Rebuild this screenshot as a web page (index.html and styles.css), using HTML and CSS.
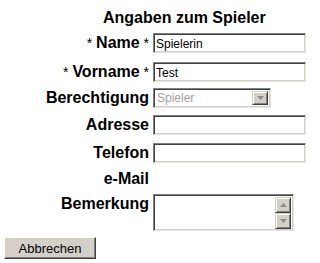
FILE: index.html
```html
<!DOCTYPE html>
<html lang="de">
<head>
<meta charset="utf-8">
<title>Angaben zum Spieler</title>
<link rel="stylesheet" href="styles.css">
</head>
<body>
<div class="page">
  <h1 class="title">Angaben zum Spieler</h1>
  <div class="form">
    <label class="lbl"><span class="req">* </span>Name<span class="req"> *</span></label>
    <div class="field"><input class="text" type="text" value="Spielerin"></div>

    <label class="lbl shift-down2"><span class="req">* </span>Vorname<span class="req"> *</span></label>
    <div class="field shift-down2"><input class="text" type="text" value="Test"></div>

    <label class="lbl shift-up1">Berechtigung</label>
    <div class="field shift-up1">
      <div class="select">
        <span class="select-value">Spieler</span>
        <span class="btn-arrow">
          <svg width="7" height="4" viewBox="0 0 7 4"><path d="M0 0H7L3.5 4Z" fill="#8c8c8c"/></svg>
        </span>
      </div>
    </div>

    <label class="lbl">Adresse</label>
    <div class="field"><input class="text" type="text" value=""></div>

    <label class="lbl shift-down1">Telefon</label>
    <div class="field shift-down1"><input class="text" type="text" value=""></div>

    <label class="lbl">e-Mail</label>
    <div class="field"></div>

    <label class="lbl lbl-top">Bemerkung</label>
    <div class="field shift-up1">
      <div class="area">
        <textarea class="area-input"></textarea>
        <div class="scroll">
          <span class="btn-arrow sb">
            <svg width="7" height="4" viewBox="0 0 7 4"><path d="M0 4H7L3.5 0Z" fill="#8c8c8c"/></svg>
          </span>
          <span class="btn-arrow sb">
            <svg width="7" height="4" viewBox="0 0 7 4"><path d="M0 0H7L3.5 4Z" fill="#8c8c8c"/></svg>
          </span>
        </div>
      </div>
    </div>
  </div>
  <button class="cancel" type="button">Abbrechen</button>
</div>
</body>
</html>
```

FILE: styles.css
```css
html, body {
  margin: 0;
  padding: 0;
  background: #ffffff;
}

body {
  font-family: "Liberation Sans", Arial, sans-serif;
  color: #000;
}

.page {
  width: 314px;
  height: 263px;
  padding: 9px 0 0 4px;
  box-sizing: border-box;
}

.title {
  margin: 0;
  padding-left: 99px;
  font-size: 16px;
  line-height: 18px;
  font-weight: bold;
}

.form {
  display: grid;
  grid-template-columns: 145px 153px;
  column-gap: 4px;
  row-gap: 7px;
  margin-top: 6px;
  align-items: center;
}

.shift-down2 { margin-top: 2px; }
.shift-down1 { margin-top: 1px; }
.shift-up1 { margin-top: -1px; }

.lbl {
  text-align: right;
  font-size: 16px;
  font-weight: bold;
  line-height: 18px;
  white-space: nowrap;
}

.lbl-top {
  align-self: start;
}

.req {
  font-weight: normal;
  font-size: 14px;
}

.field {
  display: flex;
}

.text {
  width: 153px;
  height: 20px;
  box-sizing: border-box;
  margin: 0;
  padding: 1px 2px 0;
  font-family: "Liberation Sans", Arial, sans-serif;
  font-size: 12px;
  color: #000;
  background: #fff;
  border: 1px solid;
  border-color: #808080 #e4e4e4 #e4e4e4 #808080;
  box-shadow: inset 1px 1px 0 #404040, inset -1px -1px 0 #d4d0c8;
  outline: none;
}

.select {
  width: 118px;
  height: 20px;
  box-sizing: border-box;
  display: flex;
  align-items: stretch;
  border: 1px solid;
  border-color: #808080 #e4e4e4 #e4e4e4 #808080;
  box-shadow: inset 1px 1px 0 #404040, inset -1px -1px 0 #d4d0c8;
  padding: 2px;
  background: #fff;
}

.select-value {
  flex: 1;
  font-size: 12px;
  line-height: 15px;
  color: #a0a0a0;
  padding-left: 1px;
}

.btn-arrow {
  width: 16px;
  box-sizing: border-box;
  display: flex;
  align-items: center;
  justify-content: center;
  background: #d4d0c8;
  border: 1px solid;
  border-color: #d4d0c8 #404040 #404040 #d4d0c8;
  box-shadow: inset 1px 1px 0 #fff, inset -1px -1px 0 #808080;
}

.area {
  width: 141px;
  height: 37px;
  box-sizing: border-box;
  display: flex;
  border: 1px solid;
  border-color: #808080 #e4e4e4 #e4e4e4 #808080;
  box-shadow: inset 1px 1px 0 #404040, inset -1px -1px 0 #d4d0c8;
  padding: 2px 2px 1px 2px;
  background: #fff;
}

.area-input {
  flex: 1;
  border: 0;
  margin: 0;
  padding: 0;
  resize: none;
  outline: none;
  background: transparent;
  font-family: "Liberation Sans", Arial, sans-serif;
  font-size: 12px;
}

.scroll {
  display: flex;
  flex-direction: column;
  width: 16px;
}

.sb {
  flex: 1;
}

.cancel {
  display: block;
  margin-top: 6px;
  width: 92px;
  height: 22px;
  padding: 0;
  font-family: "Liberation Sans", Arial, sans-serif;
  font-size: 13px;
  color: #000;
  background: #d4d0c8;
  border: 1px solid;
  border-color: #fff #404040 #404040 #fff;
  box-shadow: inset -1px -1px 0 #808080, inset 1px 1px 0 #d4d0c8;
}
```
